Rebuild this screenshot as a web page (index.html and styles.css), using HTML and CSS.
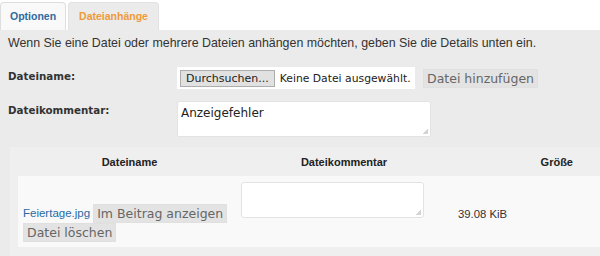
FILE: index.html
```html
<!DOCTYPE html>
<html lang="de">
<head>
    <meta charset="UTF-8">
    <title>Dateianhänge</title>
    <link rel="stylesheet" href="styles.css">
</head>
<body>
    <ul class="tabs">
        <li class="tab"><a href="#">Optionen</a></li>
        <li class="tab active"><a href="#">Dateianhänge</a></li>
    </ul>

    <div class="panel">
        <p class="intro">Wenn Sie eine Datei oder mehrere Dateien anhängen möchten, geben Sie die Details unten ein.</p>

        <div class="field field-file">
            <label class="field-label">Dateiname:</label>
            <div class="field-input">
                <div class="file-box">
                    <span class="browse">Durchsuchen...</span>
                    <span class="file-none">Keine Datei ausgewählt.</span>
                </div>
                <button class="btn btn-add">Datei hinzufügen</button>
            </div>
        </div>

        <div class="field field-comment">
            <label class="field-label">Dateikommentar:</label>
            <div class="field-input">
                <textarea class="comment">Anzeigefehler</textarea>
            </div>
        </div>

        <div class="attach-wrap">
            <table class="attach">
                <thead>
                    <tr>
                        <th class="col-name">Dateiname</th>
                        <th class="col-comment">Dateikommentar</th>
                        <th class="col-size">Größe</th>
                    </tr>
                </thead>
                <tbody>
                    <tr>
                        <td class="col-name">
                            <a href="#" class="file-link">Feiertage.jpg</a>
                            <button class="btn">Im Beitrag anzeigen</button>
                            <button class="btn">Datei löschen</button>
                        </td>
                        <td class="col-comment"><textarea class="row-comment"></textarea></td>
                        <td class="col-size">39.08 KiB</td>
                    </tr>
                </tbody>
            </table>
        </div>
    </div>
</body>
</html>
```

FILE: styles.css
```css
* {
    box-sizing: border-box;
    margin: 0;
    padding: 0;
}

body {
    font-family: "Liberation Sans", Arial, sans-serif;
    background-color: #ebebeb;
    color: #333;
    width: 600px;
    height: 256px;
    overflow: hidden;
}

.tabs {
    list-style: none;
    display: flex;
    gap: 2px;
    background-color: #fff;
    padding-top: 2px;
    height: 30px;
}

.tab a {
    display: block;
    height: 28px;
    line-height: 27px;
    padding: 0 9px;
    font-size: 10.5px;
    font-weight: bold;
    text-decoration: none;
    color: #2d6a9f;
    background-color: #f9f9f9;
    border: 1px solid #dedede;
    border-bottom: none;
    border-radius: 4px 4px 0 0;
}

.tab.active a {
    color: #ee9a3a;
    background-color: #ebebeb;
    border-color: #e2e2e2;
    padding: 0 10px;
}

.panel {
    padding-top: 4px;
}

.intro {
    font-size: 12.4px;
    color: #333;
    padding-left: 8px;
    line-height: 18px;
}

.field {
    display: flex;
    padding-left: 8px;
}

.field-file {
    margin-top: 15px;
}

.field-comment {
    margin-top: 12px;
}

.field-label {
    width: 169px;
    font-family: "DejaVu Sans", Verdana, sans-serif;
    font-size: 10.3px;
    font-weight: bold;
    color: #333;
    padding-top: 3px;
}

.field-input {
    display: flex;
    align-items: center;
    gap: 8px;
}

.file-box {
    display: flex;
    align-items: center;
    width: 238px;
    height: 22px;
    background-color: #fff;
    padding-left: 3px;
    font-family: "DejaVu Sans", Tahoma, sans-serif;
    font-size: 10.8px;
    color: #222;
    white-space: nowrap;
}

.browse {
    height: 17px;
    line-height: 15px;
    padding: 0 5px;
    border: 1px solid #adadad;
    background-color: #e1e1e1;
    margin-right: 5px;
    font-size: 11px;
}

.btn {
    font-family: "DejaVu Sans", Tahoma, sans-serif;
    font-size: 12.5px;
    color: #666;
    background-color: #e3e3e3;
    border: 1px solid #e0e0e0;
    padding: 0 3px;
    height: 19px;
    line-height: 17px;
    cursor: pointer;
}

/* light dotted-looking grip instead of the browser's resize handle */
.comment,
.row-comment {
    resize: none;
    background: #fff linear-gradient(135deg, transparent 55%, #d4d4d4 55%) no-repeat right 2px bottom 2px / 6px 6px;
    border: 1px solid #e3e3e3;
}

.comment {
    width: 254px;
    height: 36px;
    border-radius: 2px;
    font-family: "DejaVu Sans", Tahoma, sans-serif;
    font-size: 12px;
    color: #222;
    padding: 4px 3px;
}

.attach-wrap {
    margin: 10px 0 0 10px;
    background-color: #efefef;
    padding: 0 0 4px 8px;
    height: 110px;
}

.attach {
    width: 100%;
    border-collapse: collapse;
    font-size: 11px;
}

.attach th {
    height: 29px;
    font-weight: bold;
    color: #222;
    background-color: #efefef;
    text-align: center;
}

.attach td {
    background-color: #f9f9f9;
    height: 71px;
}

.attach th.col-name {
    width: 223px;
}

.attach th.col-comment {
    width: 206px;
}

.attach th.col-size {
    text-align: right;
    padding-right: 27px;
}

td.col-name {
    padding: 0 0 5px 5px;
    line-height: 19px;
    vertical-align: bottom;
}

.file-link {
    color: #2a6aa5;
    text-decoration: none;
    font-size: 11.5px;
}

td.col-name .btn {
    vertical-align: bottom;
}

td.col-comment {
    vertical-align: top;
    padding-top: 6px;
}

.row-comment {
    display: block;
    width: 183px;
    height: 36px;
    border-radius: 3px;
}

td.col-size {
    vertical-align: middle;
    padding: 4px 0 0 11px;
    font-size: 11.3px;
    color: #333;
}
```
